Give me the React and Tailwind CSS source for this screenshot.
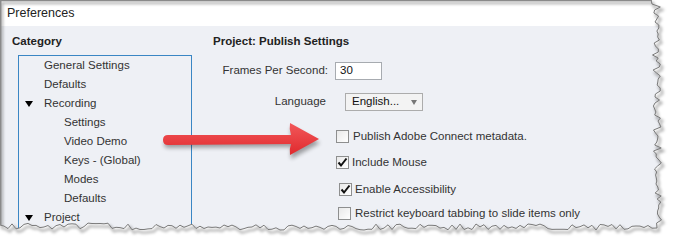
import React from 'react';

const font = { fontFamily: '"Liberation Sans", Arial, sans-serif' };

// seeded jitter for the torn paper edge
const rand = (() => {
  let s = 7;
  return () => {
    s = (s * 16807) % 2147483647;
    return (s - 1) / 2147483646;
  };
})();

const buildTorn = () => {
  const pts = [[0, 0], [651, 0]];
  for (let y = 4; y < 224; y += 3) {
    pts.push([652 + rand() * 9 + (y > 120 ? 1 : 0), y]);
  }
  pts.push([657, 228]);
  for (let x = 652; x > 0; x -= 4) {
    pts.push([x, 224 + rand() * 6 - (x < 120 ? 1 : 0)]);
  }
  pts.push([0, 225]);
  return pts;
};
const torn = buildTorn();
const tornD = 'M' + torn.map((p) => p[0].toFixed(1) + ' ' + p[1].toFixed(1)).join(' L') + ' Z';

const TreeRow = ({ label, indent, open }) => (
  <div className="h-[19px] flex items-center relative">
    {open && (
      <span className="absolute left-[6px] top-[7px] w-0 h-0 border-l-[4px] border-r-[4px] border-t-[6px] border-l-transparent border-r-transparent border-t-black" />
    )}
    <span className={indent ? 'pl-[45px]' : 'pl-[25px]'}>{label}</span>
  </div>
);

const Check = ({ checked }) => (
  <span className="w-[13px] h-[13px] border border-[#8e8f8f] bg-gradient-to-br from-[#e9e9e9] to-white flex items-center justify-center shrink-0">
    {checked && (
      <svg width="11" height="11" viewBox="0 0 11 11">
        <path d="M1.5 5.5 L4 8.5 L9.5 1.5" stroke="#111" strokeWidth="2" fill="none" />
      </svg>
    )}
  </span>
);

export default function App() {
  return (
    <div className="w-[679px] h-[240px] relative bg-white overflow-hidden text-[11.5px] text-[#1e1e1e]" style={font}>
      <div className="w-full h-full flex flex-col">
        <div className="h-[26px] shrink-0 bg-white flex items-center pl-[7px] text-[12.5px] text-[#222]">Preferences</div>
        <div className="flex-1 min-h-0 overflow-hidden bg-[#eef0f5] flex">
          <div className="w-[213px] shrink-0 pl-[12px] pt-[8px]">
            <div className="font-bold h-[14px] leading-[14px] text-[#222]">Category</div>
            <div className="ml-[6px] mt-[7px] w-[174px] h-[200px] border border-[#3a86c4] text-[#333]">
              <TreeRow label="General Settings" />
              <TreeRow label="Defaults" />
              <TreeRow label="Recording" open />
              <TreeRow label="Settings" indent />
              <TreeRow label="Video Demo" indent />
              <TreeRow label="Keys - (Global)" indent />
              <TreeRow label="Modes" indent />
              <TreeRow label="Defaults" indent />
              <TreeRow label="Project" open />
            </div>
          </div>
          <div className="flex-1 pt-[8px] text-[#333]">
            <div className="font-bold h-[14px] leading-[14px] text-[#222]">Project: Publish Settings</div>
            <div className="mt-[14px] flex items-center h-[18px]">
              <span className="w-[115px] text-right">Frames Per Second:</span>
              <span className="ml-[7px] w-[47px] h-[18px] bg-white border border-[#a7abb0] flex items-center pl-[4px] text-[#111]">30</span>
            </div>
            <div className="mt-[13px] flex items-center h-[18px]">
              <span className="w-[113px] text-right">Language</span>
              <span className="ml-[19px] w-[78px] h-[18px] bg-[#f3f3f3] border border-[#acacac] flex items-center pl-[6px] text-[#111]">
                <span className="flex-1">English...</span>
                <span className="mr-[5px] w-0 h-0 border-l-[3.5px] border-r-[3.5px] border-t-[5px] border-l-transparent border-r-transparent border-t-[#777]" />
              </span>
            </div>
            <div className="mt-[19px] flex items-center h-[13px] ml-[123px]">
              <Check />
              <span className="ml-[4px]">Publish Adobe Connect metadata.</span>
            </div>
            <div className="mt-[13px] flex items-center h-[13px] ml-[123px]">
              <Check checked />
              <span className="ml-[3px]">Include Mouse</span>
            </div>
            <div className="mt-[14px] flex items-center h-[13px] ml-[126px]">
              <Check checked />
              <span className="ml-[3px]">Enable Accessibility</span>
            </div>
            <div className="mt-[11px] flex items-center h-[13px] ml-[125px]">
              <Check />
              <span className="ml-[4px]">Restrict keyboard tabbing to slide items only</span>
            </div>
          </div>
        </div>
      </div>

      {/* red callout arrow */}
      <svg className="absolute left-0 top-0" width="679" height="240" viewBox="0 0 679 240">
        <defs>
          <linearGradient id="ar" x1="0" y1="0" x2="0" y2="1">
            <stop offset="0" stopColor="#f2585a" />
            <stop offset="1" stopColor="#e0292d" />
          </linearGradient>
          <filter id="sh" x="-10%" y="-30%" width="130%" height="190%">
            <feGaussianBlur stdDeviation="2" />
          </filter>
        </defs>
        <path d="M168 137 L291 137 Q289 130 290 124 L319 140 L290 156 Q289 150 291 144 L168 145 Q163 145 163 141 Q163 137 168 137 Z" fill="#000" opacity="0.35" filter="url(#sh)" transform="translate(1 3)" />
        <path d="M168 135 L291 135 Q289 129 290 123 L319 139 L290 155 Q289 149 291 144 L168 145 Q163 145 163 140 Q163 135 168 135 Z" fill="url(#ar)" />
      </svg>

      {/* torn paper edge */}
      <svg className="absolute left-0 top-0" width="679" height="240" viewBox="0 0 679 240">
        <defs>
          <filter id="ts" x="-5%" y="-5%" width="110%" height="110%">
            <feGaussianBlur stdDeviation="1.5" />
          </filter>
        </defs>
        <path d={'M0 0 H679 V240 H0 Z ' + tornD} fill="#fff" fillRule="evenodd" />
        <path d={tornD} fill="none" stroke="#000" strokeOpacity="0.35" strokeWidth="2" filter="url(#ts)" transform="translate(2 3)" />
        <path d={tornD} fill="none" stroke="#7a7a7a" strokeWidth="1" />
        <path d="M0.5 0 V225" stroke="#8a8a8a" strokeWidth="2" />
        <path d="M0 0.5 H652" stroke="#8a8a8a" strokeWidth="1.5" />
      </svg>
    </div>
  );
}
